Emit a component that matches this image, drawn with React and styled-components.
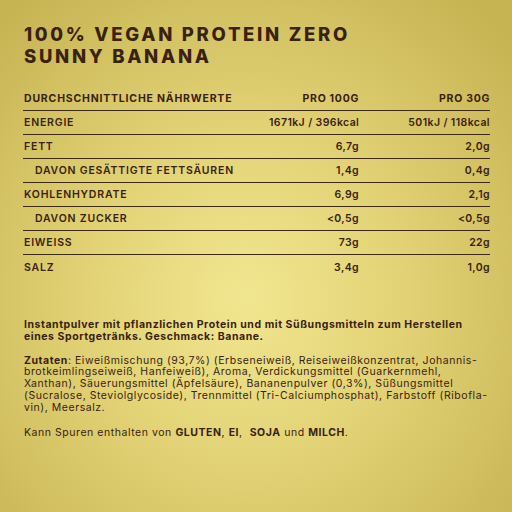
import React from 'react'
import styled, { createGlobalStyle } from 'styled-components'

const Global = createGlobalStyle`
    html, body {
        margin: 0;
        padding: 0;
    }
    body {
        font-family: Inter, "Open Sans", sans-serif;
    }
`;

const Page = styled.div`
    width: 512px;
    height: 512px;
    box-sizing: border-box;
    padding: 23px 22px 0 23px;
    color: #3a2211;
    background: radial-gradient(ellipse 70% 75% at 48% 58%, #f1e690 0%, #e2d275 45%, #c6b352 100%);
    overflow: hidden;
`;

const Title = styled.h1`
    margin: 0 0 0 1px;
    font-size: 18.5px;
    line-height: 22px;
    font-weight: 800;
    letter-spacing: 2.7px;
    text-transform: uppercase;
`;

const Table = styled.div`
    margin-top: 19px;
    width: 467px;
    display: flex;
    flex-direction: column;
`;

const Row = styled.div`
    display: grid;
    grid-template-columns: minmax(0, 1fr) 90px 131px;
    align-items: center;
    height: ${p => (p.head ? 25 : 24)}px;
    box-sizing: border-box;
    border-bottom: ${p => (p.last ? 'none' : '1.4px solid #3e2a14')};
    font-size: 10.5px;
    font-weight: ${p => (p.head ? 700 : 600)};
    white-space: nowrap;
`;

const Label = styled.span`
    padding-left: ${p => (p.sub ? 12 : 1)}px;
    letter-spacing: 0.8px;
    text-transform: uppercase;
`;

const Value = styled.span`
    text-align: right;
    letter-spacing: ${p => (p.head ? 0.7 : 0.4)}px;
    text-transform: ${p => (p.head ? 'uppercase' : 'none')};
`;

const Text = styled.div`
    margin-top: ${p => p.gap}px;
    padding-left: 1px;
    font-size: 10.5px;
    line-height: 11.8px;
    letter-spacing: 0.55px;
    font-weight: ${p => (p.bold ? 700 : 400)};

    b {
        font-weight: 700;
    }
`;

const rows = [
    ['Energie', '1671kJ / 396kcal', '501kJ / 118kcal'],
    ['Fett', '6,7g', '2,0g'],
    ['Davon gesättigte Fettsäuren', '1,4g', '0,4g', true],
    ['Kohlenhydrate', '6,9g', '2,1g'],
    ['Davon Zucker', '<0,5g', '<0,5g', true],
    ['Eiweiss', '73g', '22g'],
    ['Salz', '3,4g', '1,0g'],
];

export default function App() {
    return (
        <Page>
            <Global />
            <Title>
                100% Vegan Protein Zero<br />Sunny Banana
            </Title>
            <Table>
                <Row head>
                    <Label>Durchschnittliche Nährwerte</Label>
                    <Value head>Pro 100G</Value>
                    <Value head>Pro 30G</Value>
                </Row>
                {rows.map((r, i) => (
                    <Row key={r[0]} last={i === rows.length - 1}>
                        <Label sub={r[3]}>{r[0]}</Label>
                        <Value>{r[1]}</Value>
                        <Value>{r[2]}</Value>
                    </Row>
                ))}
            </Table>
            <Text bold gap={40}>
                Instantpulver mit pflanzlichen Protein und mit Süßungsmitteln zum Herstellen<br />
                eines Sportgetränks. Geschmack: Banane.
            </Text>
            <Text gap={12}>
                <b>Zutaten</b>: Eiweißmischung (93,7%) (Erbseneiweiß, Reiseiweißkonzentrat, Johannis-<br />
                brotkeimlingseiweiß, Hanfeiweiß), Aroma, Verdickungsmittel (Guarkernmehl,<br />
                Xanthan), Säuerungsmittel (Äpfelsäure), Bananenpulver (0,3%), Süßungsmittel<br />
                (Sucralose, Steviolglycoside), Trennmittel (Tri-Calciumphosphat), Farbstoff (Ribofla-<br />
                vin), Meersalz.
            </Text>
            <Text gap={13}>
                Kann Spuren enthalten von <b>GLUTEN</b>, <b>EI</b>,&nbsp; <b>SOJA</b> und <b>MILCH</b>.
            </Text>
        </Page>
    )
}
